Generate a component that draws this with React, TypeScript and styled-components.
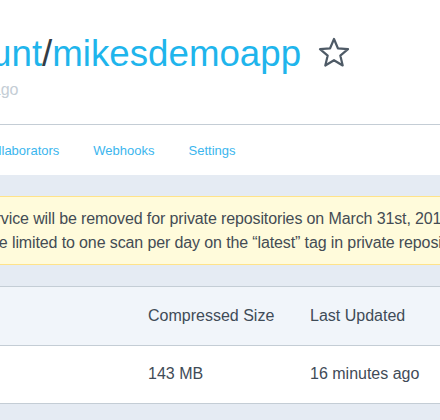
import React from 'react';
import styled, { createGlobalStyle } from 'styled-components';

const GlobalStyle = createGlobalStyle`
  html, body {
    margin: 0;
    padding: 0;
    background: #e5ebf3;
    font-family: "Liberation Sans", Arial, sans-serif;
  }
`;

const Page = styled.div`
  width: 440px;
  min-height: 420px;
  overflow: hidden;
  background: #e5ebf3;
`;

const Header = styled.header`
  background: #fff;
  padding: 32px 0 24px;
  border-bottom: 1px solid #c4cdd5;
`;

const TitleRow = styled.div<{ $offset: number }>`
  display: flex;
  align-items: center;
  margin-left: ${(p) => p.$offset}px;
  white-space: nowrap;
`;

const Title = styled.h1`
  margin: 0;
  font-size: 36.7px;
  line-height: 43px;
  font-weight: 400;
  color: #1fb5ec;
`;

const Slash = styled.span`
  color: #333c45;
`;

const StarButton = styled.span`
  display: inline-flex;
  margin-left: 17px;
  margin-top: -2px;
`;

const Subtitle = styled.div<{ $offset: number }>`
  margin-top: 5px;
  margin-left: ${(p) => p.$offset}px;
  font-size: 16px;
  line-height: 20px;
  color: #c4cdd5;
  white-space: nowrap;
`;

const TabBar = styled.nav`
  height: 50px;
  background: #fff;
  overflow: hidden;
`;

const Tabs = styled.div<{ $offset: number }>`
  display: flex;
  align-items: center;
  gap: 34px;
  height: 100%;
  margin-left: ${(p) => p.$offset}px;
  white-space: nowrap;
`;

const Tab = styled.a`
  font-size: 13px;
  color: #3bb6ee;
  text-decoration: none;
  cursor: pointer;
`;

const Content = styled.main`
  padding-top: 21px;
`;

const Notice = styled.div`
  background: #fffbdb;
  border-top: 1px solid #ffe38a;
  border-bottom: 1px solid #ffe38a;
  padding: 10px 0 9px;
  overflow: hidden;
`;

const NoticeLine = styled.div<{ $offset: number }>`
  margin-left: ${(p) => p.$offset}px;
  font-size: 16px;
  line-height: 24px;
  letter-spacing: -0.12px;
  color: #444c54;
  white-space: nowrap;
`;

const Table = styled.div`
  margin-top: 21px;
  border-top: 1px solid #c4cdd5;
`;

const HeadRow = styled.div`
  display: grid;
  grid-template-columns: 162px 1fr;
  align-items: center;
  height: 58px;
  padding-left: 148px;
  background: #f1f5fa;
  border-bottom: 1px solid #c4cdd5;
`;

const BodyRow = styled(HeadRow)`
  height: 56px;
  background: #fff;
  padding-bottom: 1px;
`;

const Cell = styled.div`
  font-size: 16px;
  color: #3f4b57;
  white-space: nowrap;
`;

function StarIcon() {
  return (
    <svg width="32" height="31" viewBox="0 0 32 31" fill="none">
      <polygon
        points="16,2 19.9,11.3 30,12.1 22.3,18.6 24.7,28.5 16,23.2 7.3,28.5 9.7,18.6 2,12.1 12.1,11.3"
        stroke="#4e5a66"
        strokeWidth="2.2"
        strokeLinejoin="round"
      />
    </svg>
  );
}

export default function App() {
  return (
    <Page>
      <GlobalStyle />
      <Header>
        <TitleRow $offset={-274}>
          <Title>
            mikesdemoaccount<Slash>/</Slash>mikesdemoapp
          </Title>
          <StarButton>
            <StarIcon />
          </StarButton>
        </TitleRow>
        <Subtitle $offset={-187}>Last pushed: 16 minutes ago</Subtitle>
      </Header>
      <TabBar>
        <Tabs $offset={-18}>
          <Tab>Collaborators</Tab>
          <Tab>Webhooks</Tab>
          <Tab>Settings</Tab>
        </Tabs>
      </TabBar>
      <Content>
        <Notice>
          <NoticeLine $offset={-21}>
            service will be removed for private repositories on March 31st, 2019.
          </NoticeLine>
          <NoticeLine $offset={-36}>
            will be limited to one scan per day on the “latest” tag in private repositories.
          </NoticeLine>
        </Notice>
        <Table>
          <HeadRow>
            <Cell>Compressed Size</Cell>
            <Cell>Last Updated</Cell>
          </HeadRow>
          <BodyRow>
            <Cell>143 MB</Cell>
            <Cell>16 minutes ago</Cell>
          </BodyRow>
        </Table>
      </Content>
    </Page>
  );
}
